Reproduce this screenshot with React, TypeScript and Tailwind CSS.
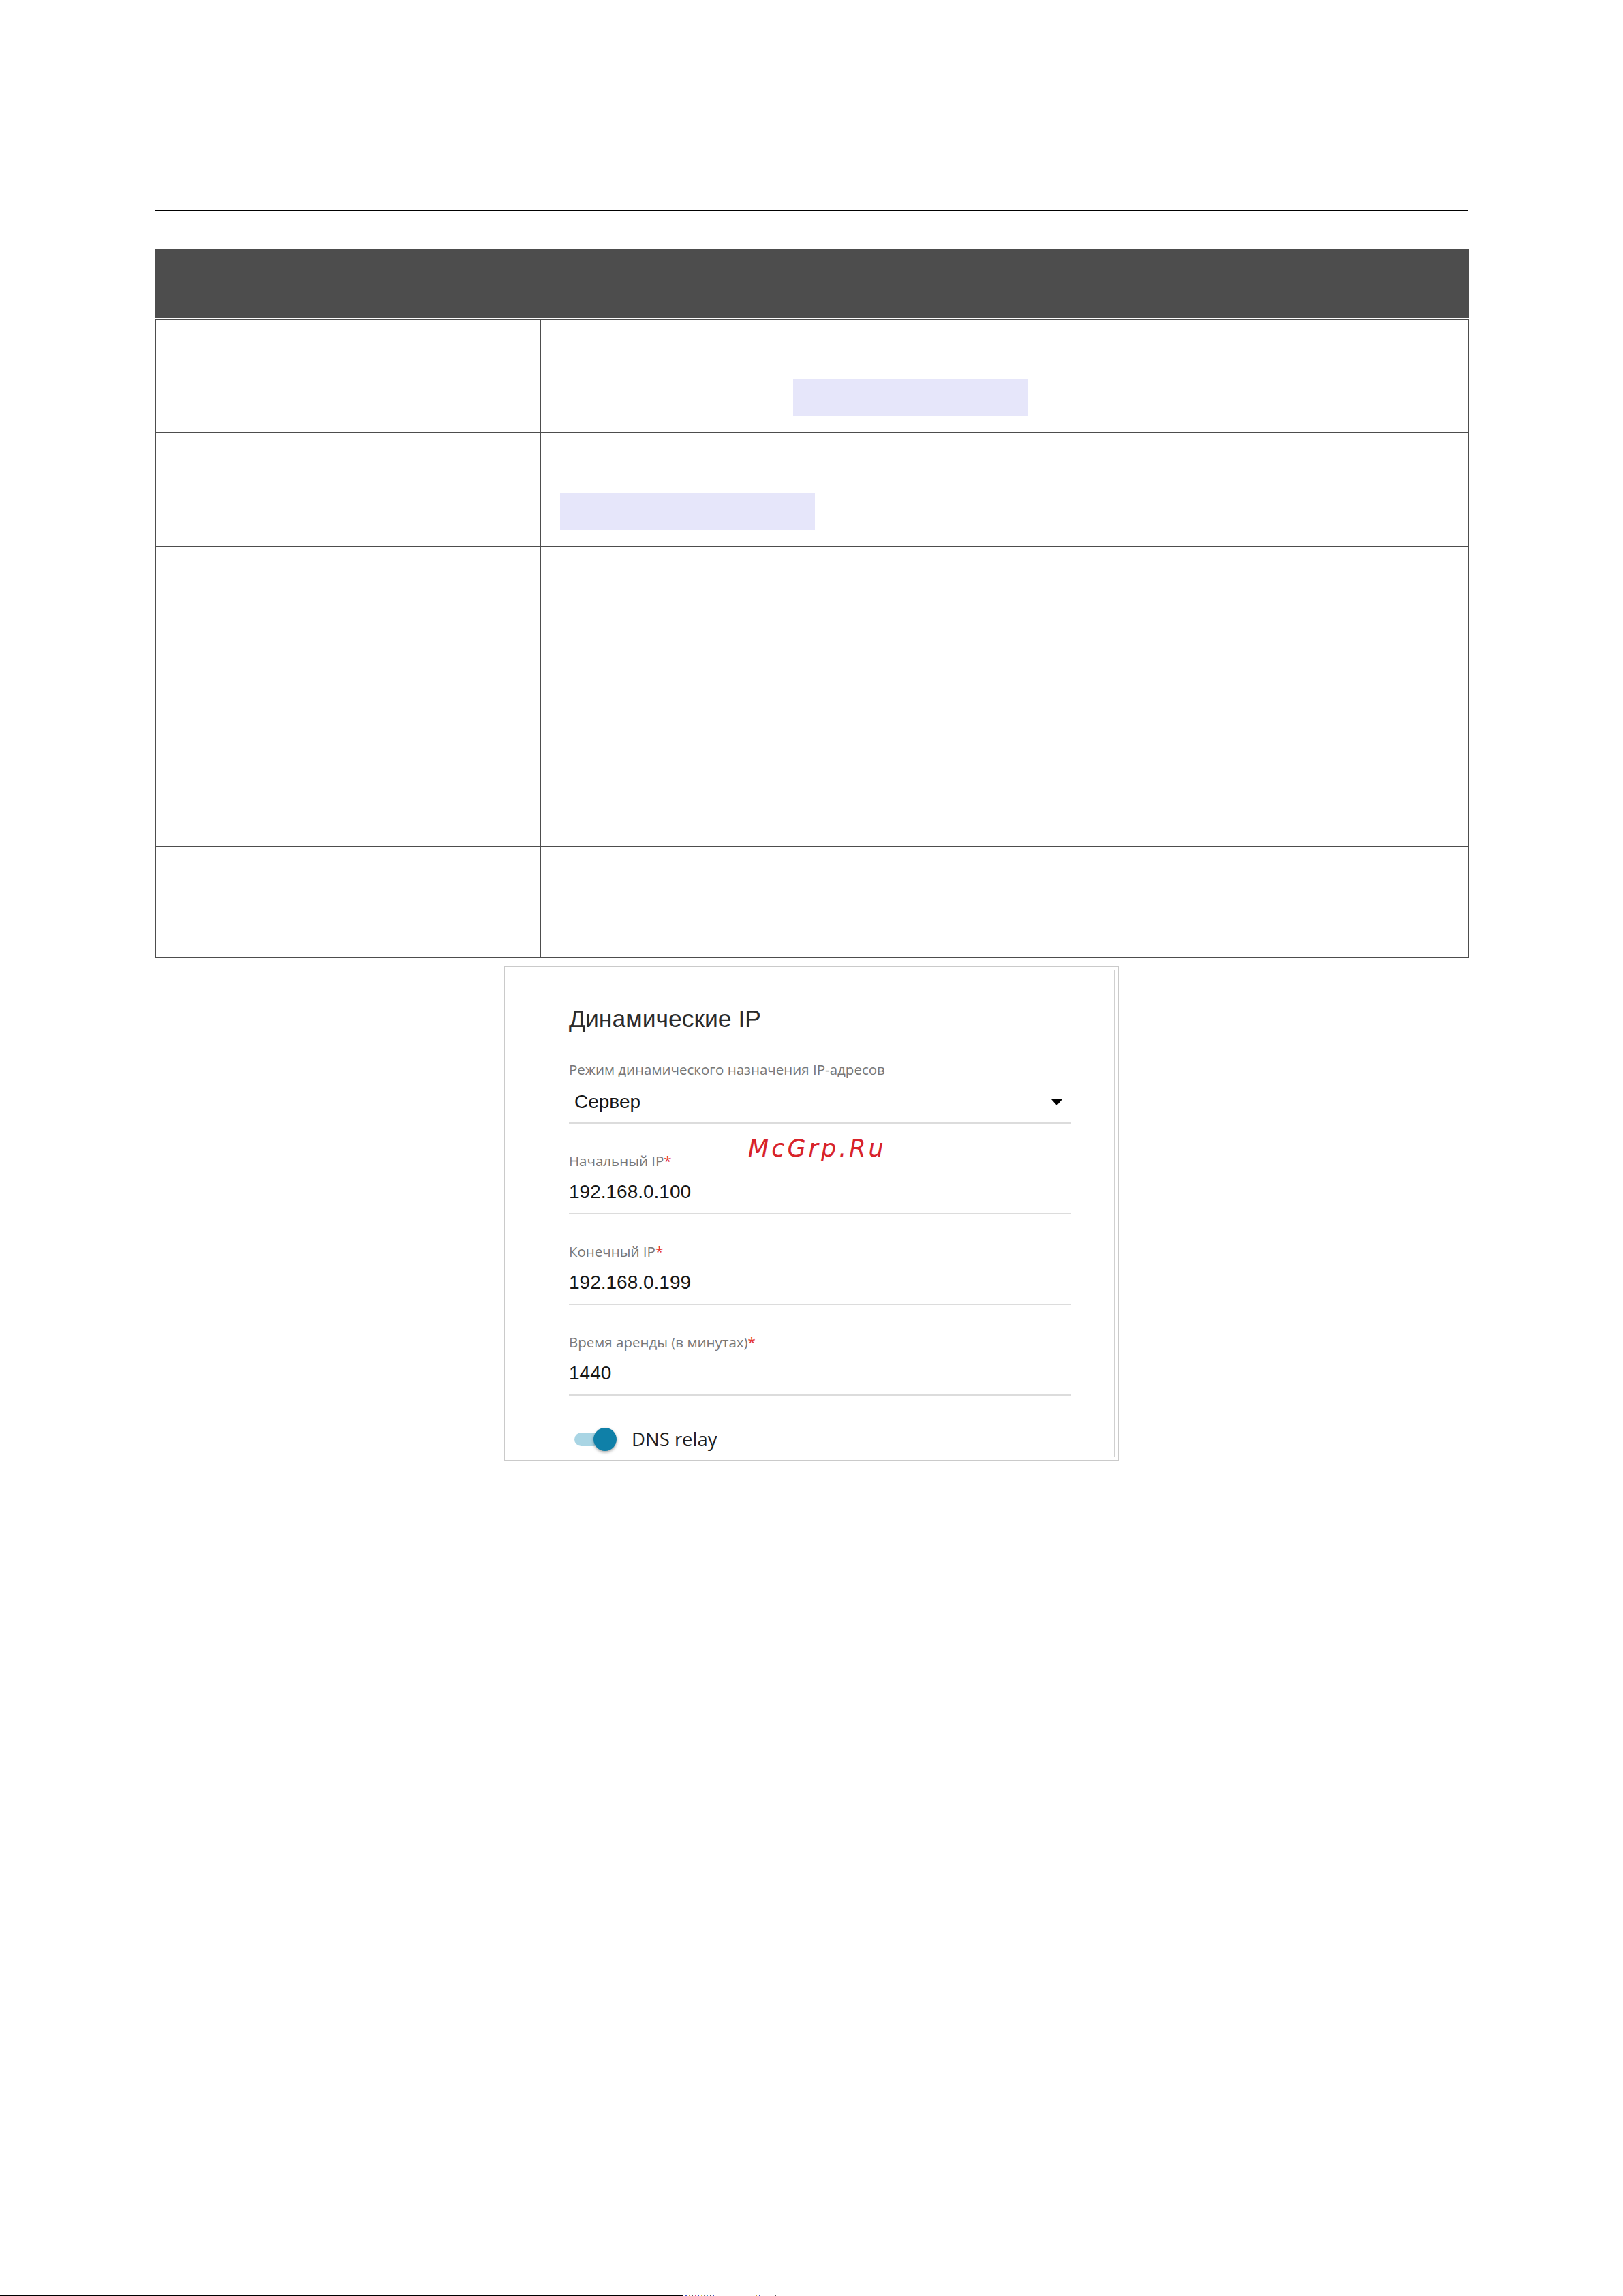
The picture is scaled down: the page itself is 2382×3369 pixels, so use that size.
import React from 'react';

const sans = "font-['Liberation_Sans',Arial,sans-serif]";
const open = "font-['Open_Sans','Noto_Sans',sans-serif]";

type Field = { label: string; value: string; required?: boolean; select?: boolean };

const fields: Field[] = [
  { label: 'Режим динамического назначения IP-адресов', value: 'Сервер', select: true },
  { label: 'Начальный IP', value: '192.168.0.100', required: true },
  { label: 'Конечный IP', value: '192.168.0.199', required: true },
  { label: 'Время аренды (в минутах)', value: '1440', required: true },
];

function FormField({ field, first }: { field: Field; first: boolean }) {
  return (
    <div className={first ? 'mt-[46px]' : 'mt-[44px]'}>
      <div className={`${open} h-[21px] whitespace-nowrap text-[20.5px] leading-[21px] text-[#777777]`}>
        {field.label}
        {field.required && <span className="text-[#e53935]">*</span>}
      </div>
      <div
        className={`${first ? 'mt-[23px]' : 'mt-[21px]'} flex h-[28px] w-[737px] items-center justify-between`}
      >
        <span className={`${sans} text-[28px] leading-none text-[#161616] ${field.select ? 'pl-[8px]' : ''}`}>
          {field.value}
        </span>
        {field.select && (
          <span className="mr-[13px] h-0 w-0 border-x-[8px] border-t-[9px] border-x-transparent border-t-black" />
        )}
      </div>
      <div className={`${first ? 'mt-[16px]' : 'mt-[17px]'} h-[2px] w-[737px] bg-[#dcdcdc]`} />
    </div>
  );
}

function Panel() {
  return (
    <div className="relative mx-auto mt-[12px] flex h-[726px] w-[902px] border border-[#cacaca] bg-white">
      <div className="flex-1 pl-[94px] pt-[58px]">
        <div className={`${sans} text-[35.5px] leading-[36px] text-[#2b2b2b]`}>Динамические IP</div>
        {fields.map((f, i) => (
          <FormField key={f.label} field={f} first={i === 0} />
        ))}
        <div className="mt-[44px] flex h-[40px] items-center pl-[8px]">
          <div className="relative flex h-[34px] w-[62px] items-center">
            <div className="h-[20px] w-[56px] rounded-full bg-[#a9d5e4]" />
            <div className="absolute right-0 top-0 h-[34px] w-[34px] rounded-full bg-[#0f80a8] shadow-[0_2px_4px_rgba(0,0,0,0.35)]" />
          </div>
          <span className={`${open} ml-[22px] text-[27.5px] leading-none text-[#1e1e1e]`}>DNS relay</span>
        </div>
      </div>
      <div className="mb-[5px] mr-[4px] mt-[4px] w-[2px] bg-[#d0d0d0]" />
      {/* водяной знак поверх скриншота */}
      <span
        className="absolute left-[357px] top-[249px] font-['DejaVu_Sans',sans-serif] text-[35px] italic leading-none tracking-[4px] text-[#d8232a]"
      >
        McGrp.Ru
      </span>
    </div>
  );
}

export default function App() {
  return (
    <div className="flex min-h-[3369px] w-[2382px] flex-col bg-white">
      <div className="ml-[227px] mt-[308px] h-px w-[1927px] bg-black" />

      <div className="ml-[227px] mt-[56px] w-[1929px]">
        <div className="h-[102px] bg-[#4d4d4d]" />
        <div className="mt-px border-2 border-[#4d4d4d]">
          <div className="flex h-[166px] border-b-2 border-[#4d4d4d]">
            <div className="w-[565px] border-r-2 border-[#4d4d4d]" />
            <div className="flex-1">
              <div className="ml-[370px] mt-[86px] h-[54px] w-[345px] bg-[#e6e6fa]" />
            </div>
          </div>
          <div className="flex h-[167px] border-b-2 border-[#4d4d4d]">
            <div className="w-[565px] border-r-2 border-[#4d4d4d]" />
            <div className="flex-1">
              <div className="ml-[28px] mt-[87px] h-[54px] w-[374px] bg-[#e6e6fa]" />
            </div>
          </div>
          <div className="flex h-[440px] border-b-2 border-[#4d4d4d]">
            <div className="w-[565px] border-r-2 border-[#4d4d4d]" />
            <div className="flex-1" />
          </div>
          <div className="flex h-[161px]">
            <div className="w-[565px] border-r-2 border-[#4d4d4d]" />
            <div className="flex-1" />
          </div>
        </div>
      </div>

      <Panel />

      <div className="mt-auto flex h-[2px] items-end">
        <div className="h-[2px] w-[1003px] bg-black" />
        <div className="ml-[3px] flex h-[2px] gap-[3px]">
          <span className="w-[2px] bg-[#3a56c8]" />
          <span className="w-[1px] bg-[#c9a43a]" />
          <span className="w-[2px] bg-[#555555]" />
          <span className="w-[1px] bg-[#d44a8a]" />
          <span className="w-[2px] bg-[#3a56c8]" />
          <span className="w-[1px] bg-[#d6c23a]" />
          <span className="w-[2px] bg-[#777777]" />
          <span className="w-[1px] bg-[#3a9ad6]" />
          <span className="w-[2px] bg-[#555555]" />
          <span className="w-[1px] bg-[#3a56c8]" />
          <span className="ml-[30px] w-[1px] bg-[#3a56c8]" />
          <span className="ml-[25px] w-[1px] bg-[#c9a43a]" />
          <span className="w-[1px] bg-[#3a56c8]" />
          <span className="ml-[20px] w-[1px] bg-[#555555]" />
        </div>
      </div>
    </div>
  );
}
